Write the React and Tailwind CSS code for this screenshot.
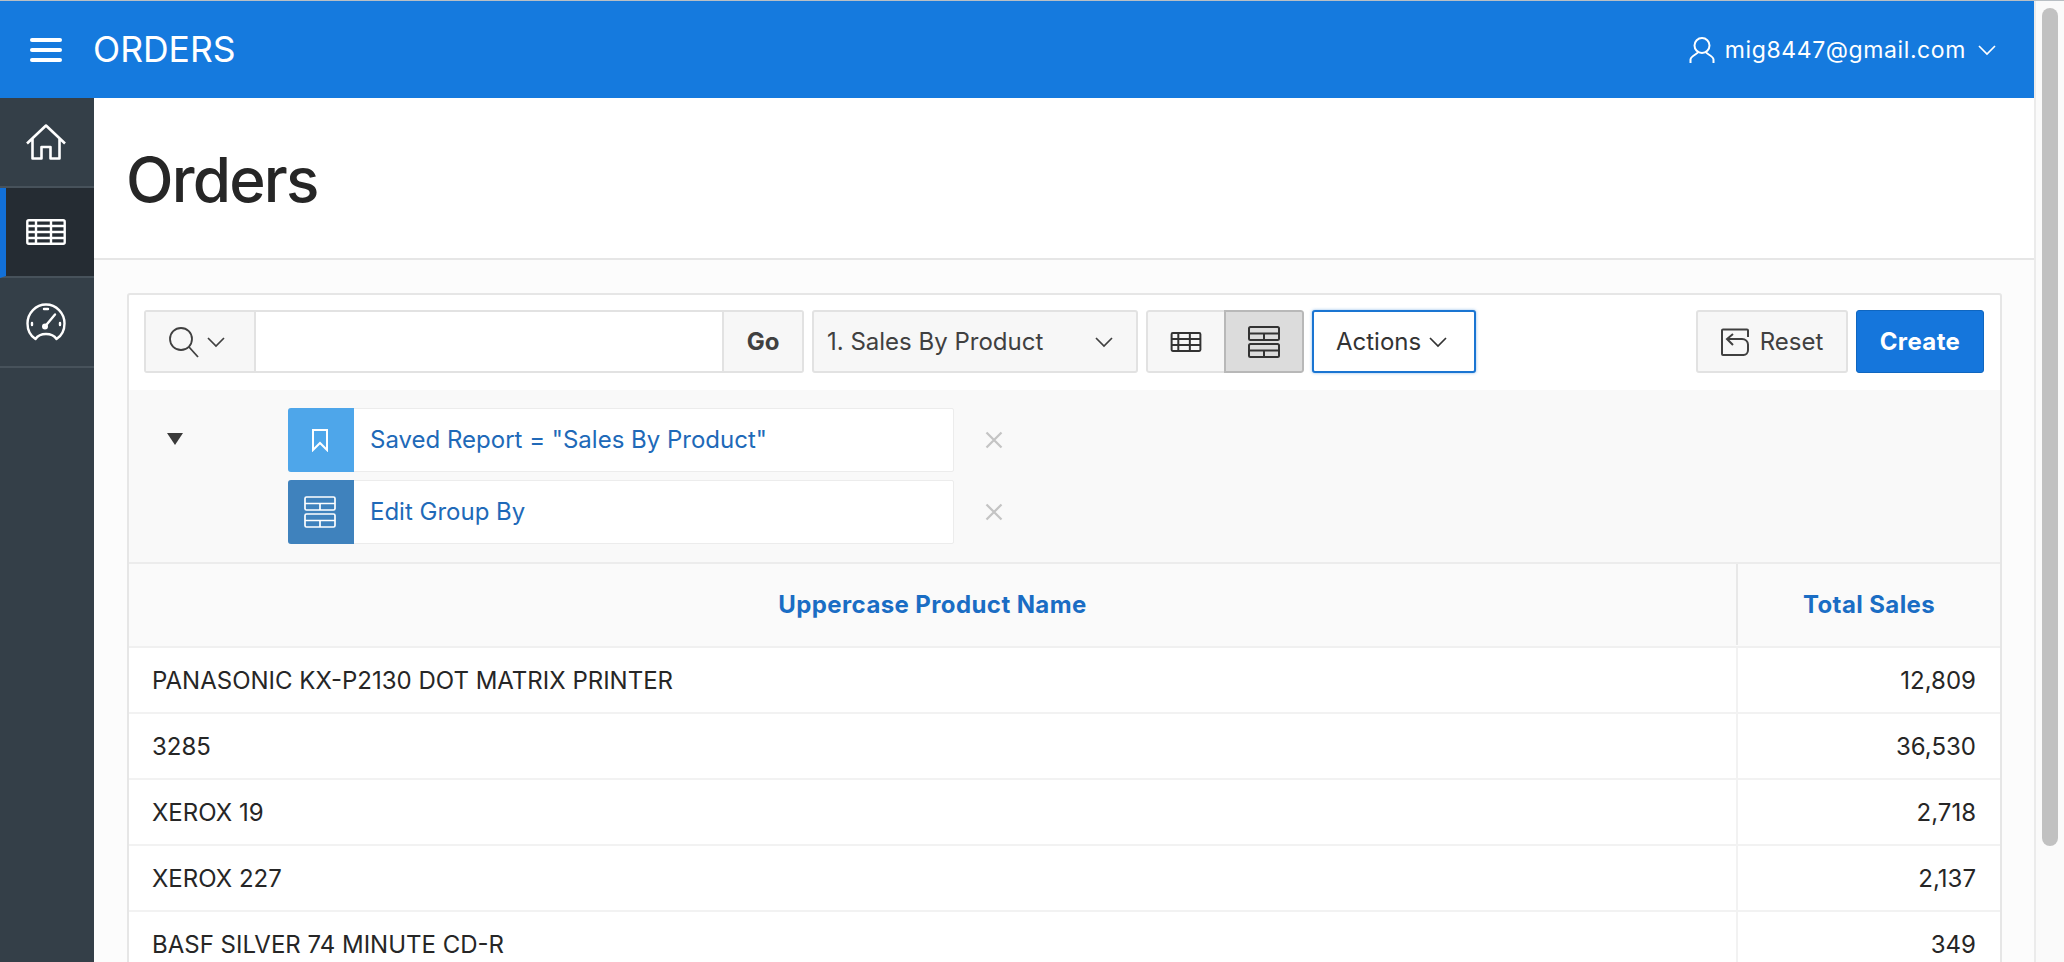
import React from "react";

const font = { fontFamily: "Inter, 'Noto Sans', sans-serif" };

function GridIcon({ className, lines, sw }) {
  return (
    <svg viewBox="0 0 40 26" className={className} fill="none" stroke="currentColor" strokeWidth={sw}>
      <rect x="1.300" y="1.300" width="37.400" height="23.400" rx="1.500" />
      <path d={lines} />
      <path d="M10 1.300V24.700M25 1.300V24.700" />
    </svg>
  );
}

function GroupIcon({ className, sw }) {
  return (
    <svg viewBox="0 0 32 32" className={className} fill="none" stroke="currentColor" strokeWidth={sw}>
      <rect x="1" y="1" width="30" height="13" rx="1.500" />
      <path d="M1 7.500h30M16 7.500V14" />
      <rect x="1" y="18" width="30" height="13" rx="1.500" />
      <path d="M1 24.500h30M16 24.500V31" />
    </svg>
  );
}

function Chevron({ className }) {
  return (
    <svg viewBox="0 0 20 12" className={className} fill="none" stroke="currentColor" strokeWidth="1.700">
      <path d="M2 2l8 8 8-8" />
    </svg>
  );
}

function Close() {
  return (
    <svg viewBox="0 0 16 16" className="w-[20px] h-[20px] text-[#c4c4c4]" fill="none" stroke="currentColor" strokeWidth="1.800">
      <path d="M2 2l12 12M14 2L2 14" />
    </svg>
  );
}

function Chip({ color, icon, label }) {
  return (
    <div className="flex items-center">
      <div className="w-[666px] h-[64px] flex bg-white rounded-[2px] border border-[#ececec]">
        <div className={`w-[66px] -ml-px -my-px flex items-center justify-center pr-[2px] rounded-l-[3px] text-white ${color}`}>
          {icon}
        </div>
        <div className="flex-1 flex items-center pl-[16px] text-[24px] text-[#2069b8]">{label}</div>
      </div>
      <div className="ml-[30px]">
        <Close />
      </div>
    </div>
  );
}

const rows = [
  ["PANASONIC KX-P2130 DOT MATRIX PRINTER", "12,809"],
  ["3285", "36,530"],
  ["XEROX 19", "2,718"],
  ["XEROX 227", "2,137"],
  ["BASF SILVER 74 MINUTE CD-R", "349"],
];

export default function App() {
  return (
    <div style={font} className="h-screen overflow-hidden flex bg-white border-t border-[#b9bfc4] text-[#262626]">
      <div className="flex-1 min-w-0 flex flex-col">
        {/* Header */}
        <header className="h-[97px] shrink-0 bg-[#157ade] text-white flex items-center justify-between pl-[30px] pr-[37px]">
          <div className="flex items-center">
            <div className="w-[32px] flex flex-col gap-[6px]">
              <div className="h-[4px] rounded-full bg-white" />
              <div className="h-[4px] rounded-full bg-white" />
              <div className="h-[4px] rounded-full bg-white" />
            </div>
            <span className="ml-[31px] text-[35.500px] leading-none">ORDERS</span>
          </div>
          <div className="flex items-center">
            <svg viewBox="0 0 26 28" className="w-[26px] h-[28px]" fill="none" stroke="currentColor" strokeWidth="2">
              <circle cx="13" cy="9.500" r="7.500" />
              <path d="M9 16c0 2-7 3.500-7.500 7.500V27M17 16c0 2 7 3.500 7.500 7.500V27" />
            </svg>
            <span className="ml-[10px] pt-[1px] text-[23px] tracking-[0.600px]">mig8447@gmail.com</span>
            <Chevron className="ml-[11px] w-[20px] h-[12px]" />
          </div>
        </header>

        <div className="flex-1 min-h-0 flex">
          {/* Sidebar */}
          <nav className="w-[94px] shrink-0 bg-[#343f48] text-white">
            <div className="h-[90px] flex items-center justify-center border-b-2 border-[#47525b] pr-[2px]">
              <svg viewBox="0 0 40 36" className="w-[40px] h-[36px]" fill="none" stroke="currentColor" strokeWidth="2.600" strokeLinejoin="round">
                <path d="M1 19.500L20 1.500 39 19.500M6.500 15v19.500h9V23h9v11.500h9V15" />
              </svg>
            </div>
            <div className="h-[90px] flex items-center justify-center bg-[#252c33] border-l-[6px] border-[#1270d8] border-b-2 border-b-[#47525b] pr-[8px]">
              <GridIcon className="w-[40px] h-[26px]" lines="M1 7h38M1 13h38M1 19h38" sw="2.400" />
            </div>
            <div className="h-[90px] flex items-center justify-center border-b-2 border-[#47525b] pr-[2px]">
              <svg viewBox="0 0 40 38" className="w-[40px] h-[38px]" fill="none" stroke="currentColor" strokeWidth="2.400" strokeLinejoin="round" strokeLinecap="round">
                <path d="M9.500 36C4 32.500 1.500 27 1.500 20.500 1.500 10 9.800 1.500 20 1.500S38.500 10 38.500 20.500c0 6.500-2.500 12-8 15.500-2-3-5-5-10.500-5S11.500 33 9.500 36z" />
                <path d="M19 23.500l10-12M18 6h4M6 20v2M34 20v2" />
                <circle cx="19" cy="23.500" r="1.800" fill="currentColor" />
              </svg>
            </div>
          </nav>

          {/* Content */}
          <main className="flex-1 min-w-0 bg-[#fcfcfc]">
            <div className="h-[162px] bg-white border-b-2 border-[#e6e6e6] flex items-center pl-[32px] pt-[4px]">
              <h1 className="text-[62px] leading-none font-medium tracking-[-1.800px] text-[#262626]">Orders</h1>
            </div>

            <div className="mt-[33px] ml-[33px] mr-[32px] bg-white border-2 border-[#e6e6e6] rounded-t-[3px]">
              {/* Toolbar */}
              <div className="h-[95px] flex items-center pl-[15px] pr-[16px] pb-[2px]">
                <div className="w-[660px] h-[63px] flex border-2 border-[#e2e2e2] rounded-[3px] bg-white">
                  <div className="w-[110px] flex items-center justify-start pl-[22px] gap-[6px] bg-[#f7f7f7] border-r-2 border-[#e2e2e2] text-[#404040]">
                    <svg viewBox="0 0 32 32" className="w-[32px] h-[32px]" fill="none" stroke="currentColor" strokeWidth="1.800">
                      <circle cx="13" cy="13" r="11" />
                      <path d="M21 21l9 10" />
                    </svg>
                    <Chevron className="w-[20px] h-[12px]" />
                  </div>
                  <div className="flex-1" />
                  <div className="w-[80px] flex items-center justify-center bg-[#f7f7f7] border-l-2 border-[#e2e2e2] text-[24px] font-bold text-[#404040]">
                    Go
                  </div>
                </div>

                <div className="ml-[8px] w-[326px] h-[63px] flex items-center justify-between pl-[13px] pr-[22px] bg-[#f7f7f7] border-2 border-[#e2e2e2] rounded-[3px] text-[24px] text-[#404040]">
                  <span>1. Sales By Product</span>
                  <Chevron className="w-[20px] h-[12px]" />
                </div>

                <div className="ml-[8px] w-[158px] h-[63px] flex rounded-[3px] overflow-hidden">
                  <div className="w-[78px] flex items-center justify-center bg-[#f7f7f7] border-2 border-r-0 border-[#e2e2e2] rounded-l-[3px] text-[#333333]">
                    <GridIcon className="w-[32px] h-[20px]" lines="M1 9h38M1 17h38" sw="2.600" />
                  </div>
                  <div className="flex-1 flex items-center justify-center bg-[#dcdcdc] border-2 border-[#b8b8b8] rounded-r-[3px] text-[#333333]">
                    <GroupIcon className="w-[32px] h-[32px]" sw="2" />
                  </div>
                </div>

                <div className="ml-[8px] w-[164px] h-[63px] flex items-center justify-start pl-[22px] gap-[7px] bg-white border-2 border-[#1a75d2] rounded-[3px] shadow-[0_0_3px_rgba(26,117,210,0.5)] text-[24px] text-[#333333]">
                  <span>Actions</span>
                  <Chevron className="w-[20px] h-[12px]" />
                </div>

                <div className="flex-1" />

                <div className="w-[152px] h-[63px] flex items-center justify-center gap-[11px] bg-[#f7f7f7] border-2 border-[#e2e2e2] rounded-[3px] text-[24px] text-[#404040]">
                  <svg viewBox="0 0 28 28" className="w-[28px] h-[28px]" fill="none" stroke="currentColor" strokeWidth="2">
                    <path d="M27 9V2.500a1 1 0 0 0-1-1H2a1 1 0 0 0-1 1V26a1 1 0 0 0 1 1h21" strokeLinejoin="round" />
                    <path d="M12 6L6 11l6 6M6 11h15c3.500 0 6 2.500 6 5.500V22c0 3-2 5-4.500 5H14" />
                  </svg>
                  <span>Reset</span>
                </div>

                <div className="ml-[8px] w-[128px] h-[63px] flex items-center justify-center bg-[#1576dc] border border-[#0f66c0] rounded-[3px] text-[24px] tracking-[0.400px] font-bold text-white">
                  Create
                </div>
              </div>

              {/* Filters */}
              <div className="h-[174px] bg-[#f9f9f9] border-b-2 border-[#ececec] pt-[18px] flex">
                <div className="w-[159px] shrink-0 flex justify-start pl-[38px] pt-[25px]">
                  <div className="w-[16px] h-[12px] bg-[#3a3a3a] [clip-path:polygon(0_0,100%_0,50%_100%)]" />
                </div>
                <div className="flex flex-col gap-[8px]">
                  <Chip
                    color="bg-[#4ea6ea]"
                    label={'Saved Report = "Sales By Product"'}
                    icon={
                      <svg viewBox="0 0 16 23" className="w-[16px] h-[23px]" fill="none" stroke="currentColor" strokeWidth="2">
                        <path d="M1 1h14v20l-7-7-7 7z" />
                      </svg>
                    }
                  />
                  <Chip
                    color="bg-[#3f82bd]"
                    label="Edit Group By"
                    icon={<GroupIcon className="w-[32px] h-[32px]" sw="1.700" />}
                  />
                </div>
              </div>

              {/* Report */}
              <div className="flex h-[84px] pb-[1px] bg-[#fafafa] border-b-2 border-[#f0f0f0] text-[24px] tracking-[0.400px] font-bold text-[#1a6dc4]">
                <div className="flex-1 flex items-center justify-center">Uppercase Product Name</div>
                <div className="w-[264px] shrink-0 flex items-center justify-center border-l-2 border-[#e8e8e8]">Total Sales</div>
              </div>
              {rows.map((r) => (
                <div key={r[0]} className="flex h-[66px] border-b-2 border-[#f2f2f2] text-[24px] text-[#262626]">
                  <div className="flex-1 flex items-center pl-[23px] pt-[1px]">{r[0]}</div>
                  <div className="w-[264px] shrink-0 flex items-center justify-end pr-[24px] pt-[1px] border-l-2 border-[#f2f2f2]">{r[1]}</div>
                </div>
              ))}
            </div>
          </main>
        </div>
      </div>

      {/* Scrollbar */}
      <div className="w-[30px] shrink-0 bg-[#fafafa] border-l-2 border-[#ebebeb] pl-[6px] pt-[7px]">
        <div className="w-[16px] h-[838px] rounded-full bg-[#c1c1c1]" />
      </div>
    </div>
  );
}
